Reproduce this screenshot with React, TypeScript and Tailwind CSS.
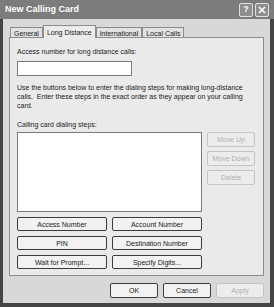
import React from "react";

const font = { fontFamily: '"Liberation Sans", Arial, sans-serif' };

function Btn({ label, disabled, className = "" }: { label: string; disabled?: boolean; className?: string }) {
  return (
    <div
      className={
        "flex items-center justify-center rounded-[2px] border text-[7px] leading-none " +
        (disabled
          ? "border-[#c4c4c4] bg-[#ececec] text-[#b0b0b0] "
          : "border-[#3c3c3c] bg-[#f2f2f2] text-[#1a1a1a] ") +
        className
      }
    >
      {label}
    </div>
  );
}

function Tab({ label, active }: { label: string; active?: boolean }) {
  return (
    <div
      className={
        "border border-b-0 border-[#8c8c8c] px-[3px] text-[7px] leading-none text-[#1a1a1a] " +
        (active
          ? "-mb-px z-10 h-[13px] bg-[#ececec] pt-[3px]"
          : "h-[10px] bg-[#e2e2e2] pt-[2px]")
      }
    >
      {label}
    </div>
  );
}

export default function App() {
  return (
    <div className="flex h-[307px] w-[274px] flex-col overflow-hidden" style={font}>
      {/* Title bar */}
      <div className="flex h-[19px] shrink-0 items-center justify-between bg-[#7c7c7c] pl-[5px] pr-[5px]">
        <span className="text-[9px] font-bold text-white">New Calling Card</span>
        <div className="flex gap-[2px]">
          <div className="flex h-[14px] w-[14px] items-center justify-center rounded-[2px] border border-[#e0e0e0] bg-[#8e8e8e] text-[9px] font-bold leading-none text-white">
            ?
          </div>
          <div className="flex h-[14px] w-[14px] items-center justify-center rounded-[2px] border border-[#e0e0e0] bg-[#8e8e8e]">
            <svg width="8" height="8" viewBox="0 0 8 8">
              <path d="M1 1 L7 7 M7 1 L1 7" stroke="#fff" strokeWidth="1.6" />
            </svg>
          </div>
        </div>
      </div>

      {/* Body */}
      <div className="flex flex-1 flex-col border-b-[4px] border-l-[3px] border-r-[4px] border-[#444] bg-[#d8d8d8] pl-[6px] pt-[6px]">
        <div className="flex items-end pl-[1px]">
          <Tab label="General" />
          <Tab label="Long Distance" active />
          <Tab label="International" />
          <Tab label="Local Calls" />
        </div>
        <div className="h-[239px] w-[255px] border border-[#8c8c8c] bg-[#eaeaea] px-[7px] pt-[9px] text-[7px] leading-[9px] text-[#1a1a1a]">
          <div>Access number for long distance calls:</div>
          <div className="mt-[5px] h-[15px] w-[115px] border border-[#7a7a7a] bg-white" />
          <div className="mt-[7px] w-[240px]">
            Use the buttons below to enter the dialing steps for making long-distance calls.&nbsp; Enter these steps in
            the exact order as they appear on your calling card.
          </div>
          <div className="mt-[10px]">Calling card dialing steps:</div>
          <div className="mt-[3px] flex gap-[5px]">
            <div className="h-[80px] w-[185px] border border-[#7a7a7a] bg-white" />
            <div className="flex flex-col gap-[4px]">
              <Btn label="Move Up" disabled className="h-[15px] w-[48px]" />
              <Btn label="Move Down" disabled className="h-[15px] w-[48px]" />
              <Btn label="Delete" disabled className="h-[15px] w-[48px]" />
            </div>
          </div>
          <div className="mt-[5px] grid w-[185px] grid-cols-2 gap-x-[5px] gap-y-[5px]">
            <Btn label="Access Number" className="h-[14px]" />
            <Btn label="Account Number" className="h-[14px]" />
            <Btn label="PIN" className="h-[14px]" />
            <Btn label="Destination Number" className="h-[14px]" />
            <Btn label="Wait for Prompt..." className="h-[14px]" />
            <Btn label="Specify Digits..." className="h-[14px]" />
          </div>
        </div>
        <div className="mt-[7px] flex w-[255px] justify-end gap-[5px]">
          <Btn label="OK" className="h-[15px] w-[48px]" />
          <Btn label="Cancel" className="h-[15px] w-[48px]" />
          <Btn label="Apply" disabled className="h-[15px] w-[48px]" />
        </div>
      </div>
    </div>
  );
}
